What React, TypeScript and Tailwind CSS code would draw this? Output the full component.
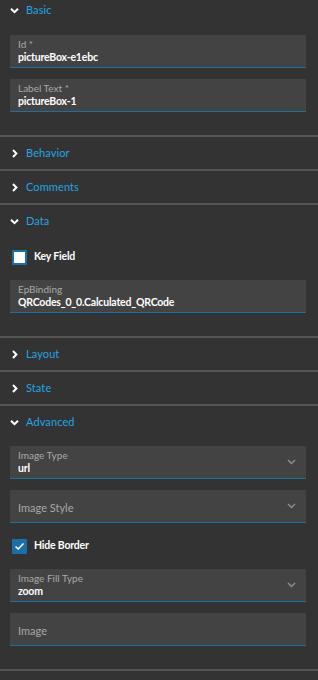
import React from "react";

const font = { fontFamily: "Lato, 'Liberation Sans', sans-serif" };

function Chevron({ open }: { open: boolean }) {
  return (
    <svg width="9" height="9" viewBox="0 0 9 9" className="shrink-0">
      {open ? (
        <path d="M1 2.8 L4.5 6.2 L8 2.8" fill="none" stroke="#fff" strokeWidth="2" />
      ) : (
        <path d="M3 1 L6.4 4.5 L3 8" fill="none" stroke="#fff" strokeWidth="2" />
      )}
    </svg>
  );
}

function Header({ title, open }: { title: string; open: boolean }) {
  return (
    <div className="h-[32px] flex items-center pl-[10px] gap-[7px]">
      <Chevron open={open} />
      <span className="text-[11px] text-[#1fa6e4] tracking-[0.1px]">{title}</span>
    </div>
  );
}

function Field({ label, value, select }: { label: string; value?: string; select?: boolean }) {
  return (
    <div className="h-[33px] bg-[#434343] border-b border-[#1b6ea6] flex items-center pl-[8px] pr-[10px]">
      <div className="flex-1 min-w-0">
        {value !== undefined ? (
          <div className="flex flex-col leading-none">
            <span className="text-[10px] text-[#a9a9a9]">{label}</span>
            <span className="text-[10.5px] text-white font-bold tracking-[-0.2px] mt-[3px]">{value}</span>
          </div>
        ) : (
          <span className="text-[11px] text-[#a9a9a9]">{label}</span>
        )}
      </div>
      {select && (
        <svg width="9" height="6" viewBox="0 0 9 6">
          <path d="M1 1 L4.5 4.5 L8 1" fill="none" stroke="#8c8c8c" strokeWidth="1.5" />
        </svg>
      )}
    </div>
  );
}

function Check({ label, checked }: { label: string; checked: boolean }) {
  return (
    <div className="h-[24px] flex items-center pl-[2px] gap-[7px]">
      {checked ? (
        <div className="w-[15px] h-[15px] bg-[#1b6ea6] flex items-center justify-center rounded-[1px]">
          <svg width="11" height="9" viewBox="0 0 11 9">
            <path d="M1.5 4.5 L4.2 7 L9.5 1.5" fill="none" stroke="#fff" strokeWidth="1.6" />
          </svg>
        </div>
      ) : (
        <div className="w-[15px] h-[15px] bg-white border-[2px] border-[#1b6ea6] rounded-[1px]" />
      )}
      <span className="text-[10.5px] text-white font-bold tracking-[-0.2px]">{label}</span>
    </div>
  );
}

function Divider() {
  return <div className="h-[2px] bg-[#555555]" />;
}

export default function App() {
  return (
    <div className="w-[318px] h-[680px] bg-[#333333] overflow-hidden" style={font}>
      <div className="-mt-[6px]">
        <Header title="Basic" open />
        <div className="pl-[10px] pt-[9px] pb-[23px] pr-[12px] flex flex-col gap-[11px]">
          <Field label="Id *" value="pictureBox-e1ebc" />
          <Field label="Label Text *" value="pictureBox-1" />
        </div>
      </div>
      <Divider />
      <Header title="Behavior" open={false} />
      <Divider />
      <Header title="Comments" open={false} />
      <Divider />
      <Header title="Data" open />
      <div className="pl-[10px] pr-[12px] pt-[8px] pb-[23px] flex flex-col gap-[11px]">
        <Check label="Key Field" checked={false} />
        <Field label="EpBinding" value="QRCodes_0_0.Calculated_QRCode" />
      </div>
      <Divider />
      <Header title="Layout" open={false} />
      <Divider />
      <Header title="State" open={false} />
      <Divider />
      <Header title="Advanced" open />
      <div className="pl-[10px] pr-[12px] pt-[8px] pb-[23px] flex flex-col gap-[11px]">
        <Field label="Image Type" value="url" select />
        <Field label="Image Style" select />
        <Check label="Hide Border" checked />
        <Field label="Image Fill Type" value="zoom" select />
        <Field label="Image" />
      </div>
      <Divider />
    </div>
  );
}
